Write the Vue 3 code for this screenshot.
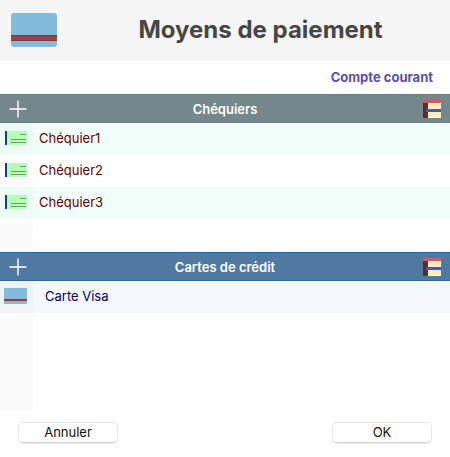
<script setup>
import { ref } from 'vue'

const account = ref('Compte courant')

const checkbooks = ref([
  { id: 1, name: 'Chéquier1' },
  { id: 2, name: 'Chéquier2' },
  { id: 3, name: 'Chéquier3' },
])

const cards = ref([
  { id: 1, name: 'Carte Visa' },
])

const addCheckbook = () => {
  const id = checkbooks.value.length + 1
  checkbooks.value.push({ id, name: `Chéquier${id}` })
}

const addCard = () => {
  cards.value.push({ id: cards.value.length + 1, name: 'Carte' })
}
</script>

<template>
  <div class="payment-dialog">
    <header class="header">
      <svg class="logo" viewBox="0 0 46 34">
        <rect width="46" height="34" rx="3" fill="#82bcda" />
        <rect y="22" width="46" height="6" fill="#964848" />
        <path d="M0 22.5H46M0 27.5H46" stroke="#8a3434" />
      </svg>
      <h1 class="title">Moyens de paiement</h1>
    </header>

    <div class="account">{{ account }}</div>

    <section>
      <div class="bar bar-checkbooks">
        <button class="icon-button" aria-label="Ajouter un chéquier" @click="addCheckbook">
          <svg width="18" height="18" viewBox="0 0 18 18">
            <path d="M9 0.5V17.5M0.5 9H17.5" stroke="#fff" stroke-width="1.4" />
          </svg>
        </button>
        <h2>Chéquiers</h2>
        <button class="icon-button" aria-label="Archives des chéquiers">
          <svg width="18" height="18" viewBox="0 0 18 18">
            <rect width="18" height="18" fill="#faeebc" />
            <rect width="5" height="18" fill="#54302b" />
            <rect width="18" height="3" fill="#d05c60" />
            <path d="M5 3.5H18M5 17.5H18" stroke="#fff8d8" />
            <rect x="3" y="9" width="15" height="3" fill="#5150cc" />
          </svg>
        </button>
      </div>
      <ul class="list list-checkbooks">
        <li v-for="item in checkbooks" :key="item.id">
          <span class="gutter">
            <svg width="23" height="14" viewBox="0 0 23 14">
              <rect x="3" width="20" height="14" fill="#b6ffb4" />
              <rect x="1" width="2" height="14" fill="#123c9c" />
              <path d="M16 3.5H22M7 8.5H22M7 11.5H22" stroke="#6f9a70" />
            </svg>
          </span>
          <span class="name">{{ item.name }}</span>
        </li>
      </ul>
    </section>

    <section>
      <div class="bar bar-cards">
        <button class="icon-button" aria-label="Ajouter une carte" @click="addCard">
          <svg width="18" height="18" viewBox="0 0 18 18">
            <path d="M9 0.5V17.5M0.5 9H17.5" stroke="#fff" stroke-width="1.4" />
          </svg>
        </button>
        <h2>Cartes de crédit</h2>
        <button class="icon-button" aria-label="Archives des cartes">
          <svg width="18" height="18" viewBox="0 0 18 18">
            <rect width="18" height="18" fill="#faeebc" />
            <rect width="5" height="18" fill="#54302b" />
            <rect width="18" height="3" fill="#d05c60" />
            <path d="M5 3.5H18M5 17.5H18" stroke="#fff8d8" />
            <rect x="3" y="9" width="15" height="3" fill="#5150cc" />
          </svg>
        </button>
      </div>
      <ul class="list list-cards">
        <li v-for="item in cards" :key="item.id">
          <span class="gutter">
            <svg width="23" height="16" viewBox="0 0 23 16">
              <rect width="23" height="16" rx="1" fill="#82bcda" />
              <rect y="11" width="23" height="2" fill="#a03a30" />
            </svg>
          </span>
          <span class="name">{{ item.name }}</span>
        </li>
      </ul>
    </section>

    <footer class="footer">
      <button class="button">Annuler</button>
      <button class="button">OK</button>
    </footer>
  </div>
</template>

<style>
body {
  background: #fff;
}
</style>

<style scoped>
.payment-dialog {
  font-family: Inter, "Liberation Sans", sans-serif;
  font-size: 13px;
  line-height: 16px;
}

.header {
  display: flex;
  align-items: center;
  box-sizing: border-box;
  padding: 0 11px 2px;
  height: 61px;
  background: #f5f5f5;
}

.logo {
  width: 46px;
  height: 34px;
  flex: none;
}

.title {
  flex: 1;
  margin: 0;
  padding-left: 25px;
  font-size: 24px;
  font-weight: 700;
  line-height: 32px;
  text-align: center;
  color: #464646;
}

.account {
  padding: 8px 17px 9px;
  font-weight: 700;
  text-align: right;
  color: #5a4fab;
}

.bar {
  display: flex;
  align-items: center;
  justify-content: space-between;
  box-sizing: border-box;
  height: 29px;
  padding: 0 9px;
  border: solid;
  border-width: 1px 0;
}

.bar h2 {
  margin: 0;
  font-size: 13px;
  font-weight: 600;
  color: #fff;
}

.bar-checkbooks {
  background: #74888c;
  border-color: #687e81;
}

.bar-cards {
  background: #5079a2;
  border-color: #2a6a9c;
}

.icon-button {
  display: flex;
  padding: 0;
  border: 0;
  background: none;
  cursor: pointer;
}

.list {
  margin: 0;
  padding: 0;
  list-style: none;
  min-height: 129px;
  background: linear-gradient(to right, #fbfbfb 33px, #fff 33px);
}

.list li {
  display: flex;
  height: 32px;
}

.gutter,
.name {
  display: flex;
  align-items: center;
  padding-bottom: 2px;
}

.gutter {
  flex: none;
  box-sizing: border-box;
  width: 33px;
  padding-left: 4px;
}

.list-checkbooks .name {
  padding-left: 6px;
  color: #640000;
}

.list-checkbooks li:nth-child(odd) {
  background: #f1fffa;
}

.list-checkbooks li:nth-child(odd) .gutter {
  background: #edfaf5;
}

.list-cards .name {
  padding-left: 12px;
  color: #000066;
}

.list-cards li:nth-child(odd) {
  background: #f5f8fd;
}

.list-cards li:nth-child(odd) .gutter {
  background: #f0f3f7;
}

.footer {
  display: flex;
  justify-content: space-between;
  padding: 12px 18px;
}

.button {
  width: 100px;
  height: 21px;
  padding: 0 0 2px;
  border: 1px solid #e8e8e8;
  border-bottom-color: #d4d4d4;
  border-radius: 5px;
  background: #fff;
  box-shadow: 0 1px 1px #ececec;
  font: inherit;
  color: #111;
}
</style>
